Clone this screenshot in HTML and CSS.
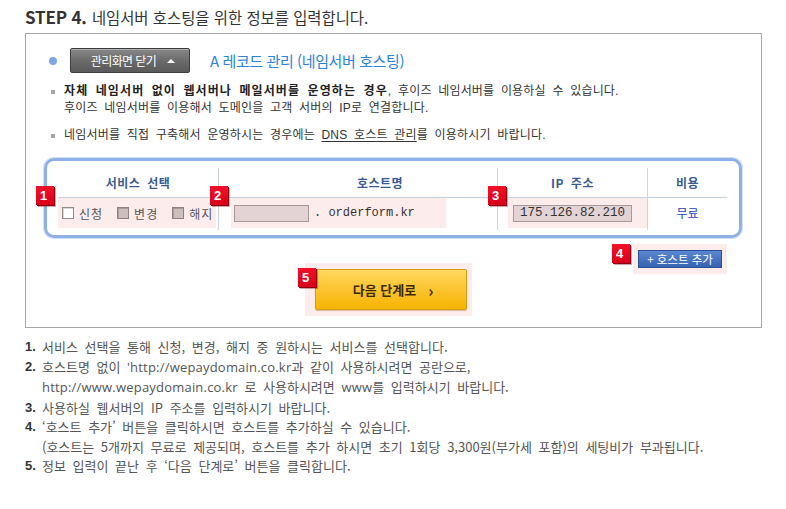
FILE: index.html
```html
<!DOCTYPE html>
<html lang="ko">
<head>
<meta charset="utf-8">
<title>STEP 4</title>
<link rel="stylesheet" href="styles.css">
</head>
<body>
<div class="page">
  <h1 class="step-title"><span class="step-no">STEP 4.</span> 네임서버 호스팅을 위한 정보를 입력합니다.</h1>
  <div class="box">
    <div class="head">
      <span class="dot"></span>
      <button class="btn-close" type="button">관리화면 닫기<span class="tri"></span></button>
      <span class="head-title">A 레코드 관리 (네임서버 호스팅)</span>
    </div>
    <ul class="notes">
      <li><b>자체 네임서버 없이 웹서버나 메일서버를 운영하는 경우</b>, 후이즈 네임서버를 이용하실 수 있습니다.<br>후이즈 네임서버를 이용해서 도메인을 고객 서버의 IP로 연결합니다.</li>
      <li>네임서버를 직접 구축해서 운영하시는 경우에는 <u>DNS 호스트 관리</u>를 이용하시기 바랍니다.</li>
    </ul>
    <div class="panel">
      <div class="grid">
        <div class="th c1">서비스 선택</div>
        <div class="th c2 th-host">호스트명</div>
        <div class="th c3">IP 주소</div>
        <div class="th c4">비용</div>

        <div class="td c1">
          <span class="badge">1</span>
          <div class="pink svc">
            <label class="chk"><span class="box-cb"></span>신청</label>
            <label class="chk"><span class="box-cb off"></span>변경</label>
            <label class="chk"><span class="box-cb off"></span>해지</label>
          </div>
        </div>
        <div class="td c2">
          <span class="badge b2">2</span>
          <div class="pink host">
            <span class="inp inp-host"></span><span class="mono">. orderform.kr</span>
          </div>
        </div>
        <div class="td c3">
          <span class="badge b3">3</span>
          <div class="pink ip">
            <span class="inp inp-ip mono">175.126.82.210</span>
          </div>
        </div>
        <div class="td c4"><span class="free">무료</span></div>
      </div>
    </div>
    <div class="add-row">
      <div class="pink add-wrap">
        <span class="badge b4">4</span>
        <button class="btn-add" type="button">+ 호스트 추가</button>
      </div>
    </div>
    <div class="next-row">
      <div class="pink next-wrap">
        <span class="badge b5">5</span>
        <button class="btn-next" type="button">다음 단계로<span class="chev">›</span></button>
      </div>
    </div>
  </div>
  <ol class="guide">
    <li><span class="num">1.</span><span class="txt">서비스 선택을 통해 신청, 변경, 해지 중 원하시는 서비스를 선택합니다.</span></li>
    <li><span class="num">2.</span><span class="txt">호스트명 없이 <span class="en">'http://wepaydomain.co.kr</span>과 같이 사용하시려면 공란으로,<br><span class="en">http://www.wepaydomain.co.kr</span> 로 사용하시려면 <span class="en">www</span>를 입력하시기 바랍니다.</span></li>
    <li><span class="num">3.</span><span class="txt">사용하실 웹서버의 IP 주소를 입력하시기 바랍니다.</span></li>
    <li><span class="num">4.</span><span class="txt">‘호스트 추가’ 버튼을 클릭하시면 호스트를 추가하실 수 있습니다.<br>(호스트는 5개까지 무료로 제공되며, 호스트를 추가 하시면 초기 1회당 3,300원(부가세 포함)의 세팅비가 부과됩니다.</span></li>
    <li><span class="num">5.</span><span class="txt">정보 입력이 끝난 후 ‘다음 단계로’ 버튼을 클릭합니다.</span></li>
  </ol>
  <div class="dots"></div>
</div>
</body>
</html>
```

FILE: styles.css
```css
* { box-sizing: border-box; }
html, body { margin: 0; padding: 0; background: #fff; }
body {
  font-family: "Liberation Sans", "Noto Sans CJK KR", sans-serif;
  font-size: 12px;
  color: #444;
}
.page {
  width: 786px;
  padding: 7px 25px 0 25px;
}
.step-title {
  margin: 0;
  height: 20px;
  line-height: 20px;
  font-size: 15.4px;
  font-weight: normal;
  color: #333;
  font-family: "Noto Sans CJK KR", sans-serif;
}
.step-no {
  font-weight: bold;
  font-size: 17px;
  color: #333;
  letter-spacing: -0.2px;
  margin-right: 1px;
}
.box {
  margin-top: 6px;
  width: 737px;
  border: 1px solid #a8a8a8;
  padding: 14px 0 11px 0;
}
.head {
  display: flex;
  align-items: center;
  height: 25px;
  padding-left: 23px;
}
.dot {
  width: 8px;
  height: 8px;
  border-radius: 50%;
  background: #7ea6e2;
  margin-right: 13px;
}
.btn-close {
  width: 120px;
  height: 25px;
  padding: 0 0 0 6px;
  border: 1px solid #3c3c3c;
  border-radius: 2px;
  background: linear-gradient(#888 0%, #6c6c6c 50%, #5a5a5a 100%);
  box-shadow: inset 0 1px 0 rgba(255,255,255,0.35);
  color: #fff;
  font-family: "Noto Sans CJK KR", sans-serif;
  font-size: 12px;
  letter-spacing: -0.6px;
  display: flex;
  align-items: center;
  justify-content: center;
}
.tri {
  width: 0;
  height: 0;
  margin-left: 11px;
  border-left: 4px solid transparent;
  border-right: 4px solid transparent;
  border-bottom: 4px solid #fff;
}
.head-title {
  margin-left: 20px;
  font-family: "Noto Sans CJK KR", sans-serif;
  font-size: 15px;
  color: #2a82da;
  letter-spacing: -0.4px;
}
.notes {
  list-style: none;
  margin: 10px 0 0 0;
  padding: 0 0 0 38px;
  line-height: 17px;
  color: #333;
  word-spacing: 3px;
  letter-spacing: 0.2px;
}
.notes li { position: relative; }
.notes li + li { margin-top: 10px; }
.notes li::before {
  content: "";
  position: absolute;
  left: -13px;
  top: 7px;
  width: 4px;
  height: 4px;
  background: #a6a6a6;
}
.notes b { color: #222; letter-spacing: 1.1px; }
.notes u { text-underline-offset: 2px; }

.panel {
  margin: 14px 0 0 18px;
  width: 698px;
  border: 3px solid #8db0e6;
  border-radius: 10px;
  box-shadow: 0 0 0 1px #d3e0f5;
  padding: 7px 12px 5px 11px;
}
.grid {
  display: grid;
  grid-template-columns: 160px 279px 150px 80px;
  grid-template-rows: 30px 32px;
}
.th {
  border-bottom: 1px solid #c3d1e6;
  text-align: center;
  line-height: 29px;
  font-weight: bold;
  color: #3a5b8f;
  font-family: "Noto Sans CJK KR", sans-serif;
  font-size: 12px;
  word-spacing: 3px;
  letter-spacing: 0.5px;
}
.c2, .c3, .c4 { border-left: 1px solid #cfd5df; }
.th-host { padding-left: 44px; }
.td { position: relative; }
.pink { background: #fdecec; }
.svc {
  height: 30px;
  margin-right: 2px;
  display: flex;
  align-items: center;
  padding-left: 4px;
  font-family: "Noto Sans CJK KR", sans-serif;
  color: #555;
  white-space: nowrap;
  letter-spacing: 1px;
}
.chk { display: flex; align-items: center; margin-right: 14px; white-space: nowrap; }
.box-cb {
  width: 12px;
  height: 12px;
  margin-right: 5px;
  border: 1px solid #8c8c8c;
  background: #fff;
  box-shadow: inset 1px 1px 0 #d8d8d8;
}
.box-cb.off {
  background: #cdbfbc;
  border-color: #8e8280;
  box-shadow: inset 1px 1px 0 #a99b98;
}
.host {
  margin-left: 12px;
  width: 215px;
  height: 30px;
  display: flex;
  align-items: center;
  padding-left: 3px;
}
.inp {
  display: inline-block;
  height: 17px;
  border: 1px solid #a89999;
  background: #e3d3d4;
}
.inp-host { width: 75px; margin-right: 5px; }
.mono {
  font-family: "Liberation Mono", monospace;
  font-size: 12px;
  color: #333;
}
.ip {
  margin-left: 10px;
  height: 30px;
  display: flex;
  align-items: center;
  padding-left: 5px;
}
.inp-ip {
  width: 119px;
  line-height: 15px;
  padding-left: 6px;
  font-size: 12.5px;
  color: #333;
}
.c4.td {
  display: flex;
  justify-content: center;
  align-items: flex-start;
}
.free {
  line-height: 30px;
  color: #2244b4;
  font-family: "Noto Sans CJK KR", sans-serif;
}
.badge {
  position: absolute;
  left: -22px;
  top: -12px;
  width: 18px;
  height: 19px;
  background: linear-gradient(#f2122a, #d8001a);
  box-shadow: 1px 1px 0 #8e0010, 2px 2px 0 rgba(120,0,10,0.35);
  color: #fff;
  font-family: "Liberation Sans", sans-serif;
  font-weight: bold;
  font-size: 13px;
  line-height: 19px;
  text-indent: 4px;
  letter-spacing: 0;
  z-index: 2;
}
.b2 { left: -9px; }
.b3 { left: -10px; }
.add-row {
  display: flex;
  justify-content: flex-end;
  margin-top: 6px;
  padding-right: 34px;
}
.add-wrap {
  position: relative;
  padding: 6px 5px;
}
.add-wrap .badge { left: -21px; top: 0; }
.btn-add {
  display: block;
  width: 84px;
  height: 18px;
  padding: 0;
  border: 1px solid #2a4f92;
  background: linear-gradient(#5a88d2, #3563b2);
  color: #fff;
  font-family: "Noto Sans CJK KR", sans-serif;
  font-size: 11.5px;
  line-height: 16px;
}
.next-row {
  margin-top: -11px;
  padding-left: 279px;
  display: flex;
}
.next-wrap {
  position: relative;
  padding: 6px 5px 6px 10px;
}
.next-wrap .badge { left: -7px; top: 5px; }
.btn-next {
  display: flex;
  align-items: center;
  justify-content: center;
  width: 152px;
  height: 41px;
  padding: 0 0 0 4px;
  border: 1px solid #d49c18;
  border-radius: 2px;
  background: linear-gradient(#ffd85e, #fbc22c 55%, #f6b400);
  box-shadow: 0 1px 1px rgba(150,90,0,0.35);
  color: #3b2a06;
  font-family: "Noto Sans CJK KR", sans-serif;
  font-size: 13px;
  font-weight: bold;
}
.chev {
  margin-left: 12px;
  font-size: 16px;
  font-weight: bold;
  line-height: 16px;
}
.guide {
  list-style: none;
  margin: 9px 0 0 0;
  padding: 0;
  line-height: 19.5px;
  color: #555;
}
.guide li { display: flex; }
.num {
  width: 17px;
  flex: none;
  font-weight: bold;
  color: #333;
  font-size: 13px;
}
.txt {
  font-family: "Noto Sans CJK KR", sans-serif;
  font-size: 13px;
  word-spacing: 3px;
}
.en {
  font-family: "Open Sans", sans-serif;
  font-size: 13px;
  letter-spacing: 0.2px;
}
.dots {
  margin-top: 38px;
  width: 736px;
  border-top: 1px dotted #c8c8c8;
}
```
